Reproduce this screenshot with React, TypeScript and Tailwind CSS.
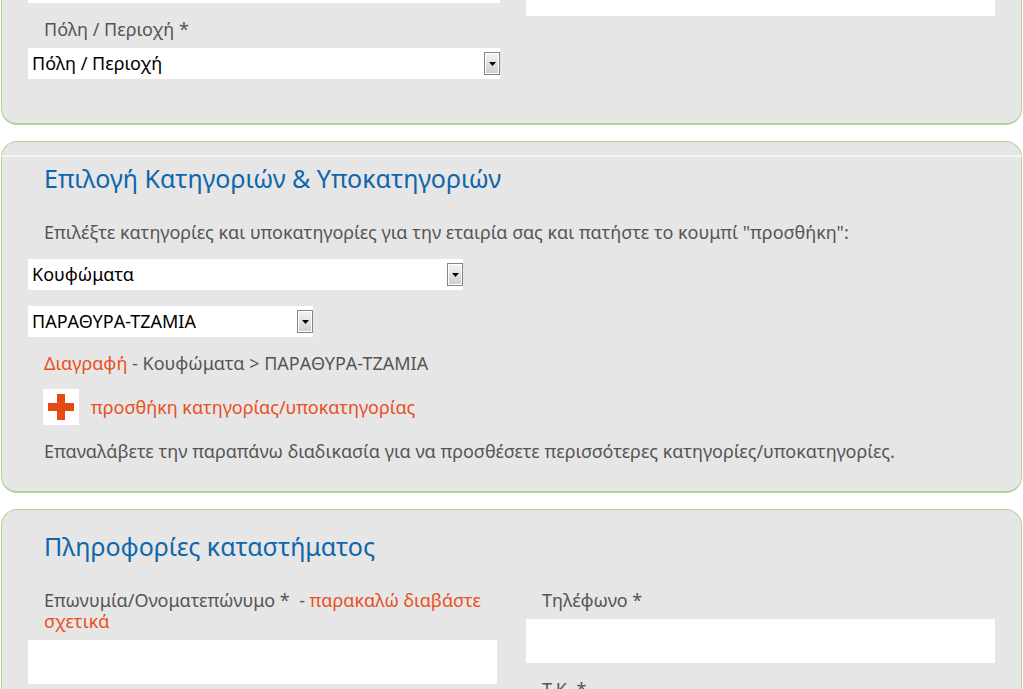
import type { ReactNode } from "react";

const panelClass = "mx-px border border-b-2 border-[#add78f] bg-[#e6e6e6] px-[26px]";
const labelClass = "block px-4";
const inputClass = "mt-2 block h-11 w-full bg-white px-1 text-black outline-none";
const linkClass = "text-[#e8501e] hover:underline";

function Select({
  id,
  label,
  options,
  className,
}: {
  id: string;
  label?: string;
  options: string[];
  className: string;
}) {
  return (
    <div className={`relative ${className}`}>
      <select
        id={id}
        aria-label={label}
        className="block h-[31px] w-full appearance-none bg-white px-1 text-black outline-none"
      >
        {options.map((option) => (
          <option key={option}>{option}</option>
        ))}
      </select>
      <span className="pointer-events-none absolute top-1 right-0 flex h-[23px] w-4 items-center justify-center border border-[#858585] bg-linear-to-b from-[#f4f4f4] to-[#cfcfcf] ring-1 ring-white ring-inset">
        <svg width="7" height="4" viewBox="0 0 7 4" aria-hidden="true">
          <path d="M0 0h7L3.5 4z" fill="#000" />
        </svg>
      </span>
    </div>
  );
}

function Title({ children }: { children: ReactNode }) {
  return <h2 className="px-4 text-[25px] leading-9 text-[#0f66ab]">{children}</h2>;
}

function PlusIcon() {
  return (
    <span className="flex size-9 items-center justify-center bg-white">
      <svg width="26" height="26" viewBox="0 0 26 26" aria-hidden="true">
        <path d="M9 0h8v9h9v8h-9v9H9v-9H0V9h9z" fill="#e64a12" />
      </svg>
    </span>
  );
}

export default function App() {
  return (
    <div className="relative h-screen overflow-hidden bg-white font-['Noto_Sans',sans-serif] text-[18px] leading-[21px] text-[#555]">
      <form className="-mt-7 flex flex-col gap-4">
        <section className={`${panelClass} rounded-b-2xl border-t-0 pb-11`}>
          <div className="grid grid-cols-2 gap-[29px]">
            <div>
              <Select id="region" label="Νομός" options={[""]} className="w-[472px]" />
              <label htmlFor="city" className={`${labelClass} mt-4 mb-2`}>
                Πόλη / Περιοχή *
              </label>
              <Select id="city" options={["Πόλη / Περιοχή"]} className="w-[472px]" />
            </div>
            <input aria-label="Διεύθυνση" className="block h-11 w-full bg-white px-1 outline-none" />
          </div>
        </section>

        <section className={`${panelClass} rounded-2xl pt-[18px] pb-[29px]`}>
          <Title>Επιλογή Κατηγοριών &amp; Υποκατηγοριών</Title>
          <p className="mt-[26px] px-4">
            Επιλέξτε κατηγορίες και υποκατηγορίες για την εταιρία σας και πατήστε το κουμπί "προσθήκη":
          </p>
          <div className="mt-4 flex flex-col gap-4">
            <Select id="category" label="Κατηγορία" options={["Κουφώματα"]} className="w-[435px]" />
            <Select id="subcategory" label="Υποκατηγορία" options={["ΠΑΡΑΘΥΡΑ-ΤΖΑΜΙΑ"]} className="w-[285px]" />
          </div>
          <p className="mt-4 px-4">
            <a href="#remove" className={linkClass}>Διαγραφή</a> - Κουφώματα &gt; ΠΑΡΑΘΥΡΑ-ΤΖΑΜΙΑ
          </p>
          <a href="#add" className={`${linkClass} mx-[15px] mt-[15px] flex w-fit items-center gap-3`}>
            <PlusIcon />
            προσθήκη κατηγορίας/υποκατηγορίας
          </a>
          <p className="mt-4 px-4">
            Επαναλάβετε την παραπάνω διαδικασία για να προσθέσετε περισσότερες κατηγορίες/υποκατηγορίες.
          </p>
        </section>

        <section className={`${panelClass} rounded-2xl pt-[18px] pb-[29px]`}>
          <Title>Πληροφορίες καταστήματος</Title>
          <div className="mt-[26px] grid grid-cols-2 gap-[29px]">
            <div>
              <div className={labelClass}>
                <label htmlFor="name">Επωνυμία/Ονοματεπώνυμο * &nbsp;- </label>
                <a href="#info" className={linkClass}>παρακαλώ διαβάστε σχετικά</a>
              </div>
              <input id="name" className={inputClass} />
            </div>
            <div>
              <label htmlFor="phone" className={labelClass}>Τηλέφωνο *</label>
              <input id="phone" type="tel" className={inputClass} />
              <label htmlFor="zip" className={`${labelClass} mt-4`}>Τ.Κ. *</label>
              <input id="zip" className={inputClass} />
            </div>
          </div>
        </section>
      </form>
      <div className="pointer-events-none absolute inset-x-0 top-[155px] h-0.5 bg-white/60" />
    </div>
  );
}
